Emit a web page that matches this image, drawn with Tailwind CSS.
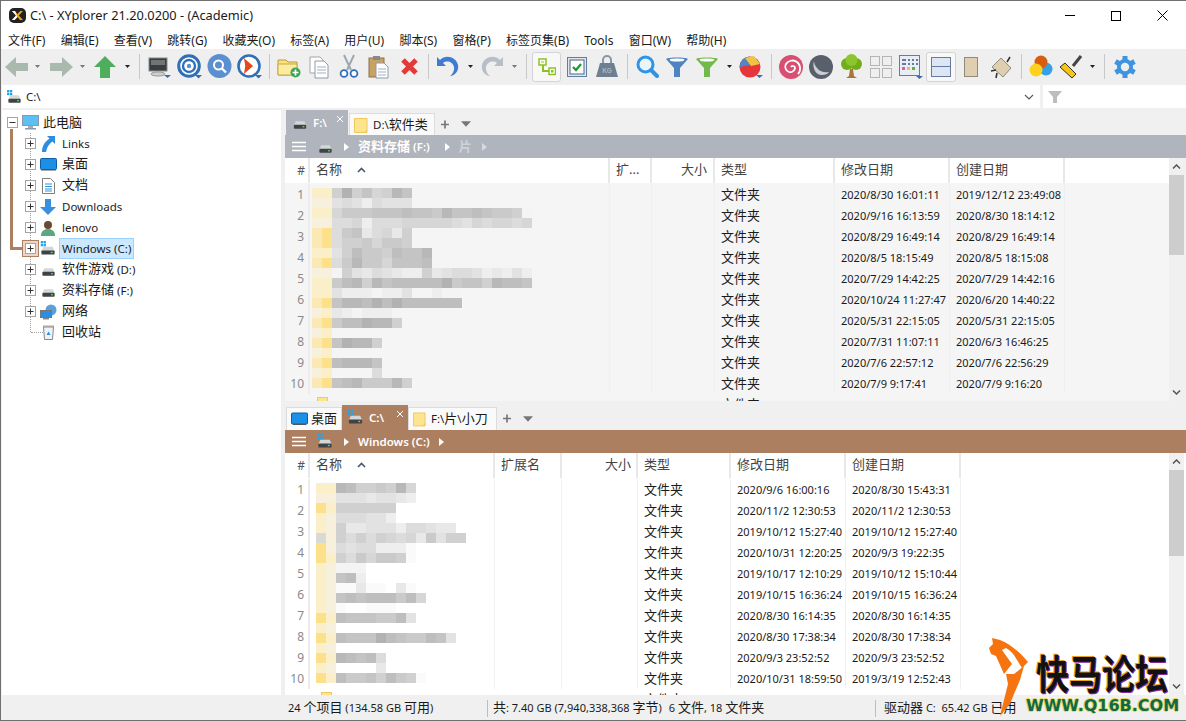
<!DOCTYPE html>
<html lang="zh">
<head>
<meta charset="utf-8">
<script src="https://cdn.jsdelivr.net/npm/@tailwindcss/browser@4"></script>
</head>
<body class="overflow-hidden bg-[#f0f0f0]">
<svg width="0" height="0" class="absolute">
  <symbol id="drive" viewBox="0 0 16 16"><path d="M3 6h10l2 5H1z" fill="#d4d7d9"/><rect x="1" y="10" width="14" height="4.5" rx="1" fill="#3f4345"/><rect x="11" y="11.5" width="2" height="1.5" fill="#5fdc5f"/></symbol>
  <symbol id="win" viewBox="0 0 6 6"><rect width="2.6" height="2.6" fill="#1fa6ee"/><rect x="3.2" width="2.6" height="2.6" fill="#1fa6ee"/><rect y="3.2" width="2.6" height="2.6" fill="#1fa6ee"/><rect x="3.2" y="3.2" width="2.6" height="2.6" fill="#1fa6ee"/></symbol>
  <symbol id="folder" viewBox="0 0 14 16"><path d="M.5 1.5h12.5v14H.5z" fill="#fde48f" stroke="#f0c85c"/><path d="M10 15.5l3-3v3z" fill="#f3c95e"/></symbol>
  <symbol id="plus" viewBox="0 0 11 11"><rect x=".5" y=".5" width="10" height="10" fill="#fff" stroke="#a5a5a5"/><path d="M2.5 5.5h6M5.5 2.5v6" stroke="#333"/></symbol>
  <symbol id="cv" viewBox="0 0 7 4"><path d="M0 0h7L3.5 4z" fill="#222"/></symbol>
  <symbol id="cvg" viewBox="0 0 7 4"><path d="M0 0h7L3.5 4z" fill="#777"/></symbol>
  <symbol id="tri" viewBox="0 0 5 8"><path d="M0 0l5 4-5 4z" fill="#fff"/></symbol>
</svg>

<div class="relative w-[1186px] h-[721px] overflow-hidden flex flex-col border-t border-l border-b border-[#707070] bg-[#f0f0f0] text-[11.5px] text-[#1a1a1a] font-['Noto_Sans','Noto_Sans_CJK_SC',sans-serif]">

  <!-- title -->
  <div class="h-[29px] shrink-0 bg-white flex items-center pl-[8px]">
    <svg width="17" height="15" viewBox="0 0 17 15"><rect x="0" y="0" width="17" height="15" rx="5" fill="#222"/><path d="M3 3l4 4.5L3 12h2.6L8.4 9l2.6 3h3L9.8 7.5 14 3h-2.8L8.5 6 6 3z" fill="#f2a20c"/><path d="M3 3l4 4.500L3 12h2.600L8.400 9 6 3z" fill="#fff"/></svg>
    <span class="ml-[4px] text-[12.8px] pt-px">C:\ - XYplorer 21.20.0200 - (Academic)</span>
    <div class="ml-auto flex items-center h-full pr-[1px]">
      <div class="w-[46px] flex justify-center"><div class="w-[10px] h-px bg-black"></div></div>
      <div class="w-[46px] flex justify-center"><div class="w-[10px] h-[10px] border border-black"></div></div>
      <div class="w-[46px] flex justify-center"><svg width="11" height="11" viewBox="0 0 11 11"><path d="M.5.5l10 10M10.5.5l-10 10" stroke="#000"/></svg></div>
    </div>
  </div>

  <!-- menu -->
  <div class="h-[19px] shrink-0 bg-white flex items-center pl-[7px] pt-[2px] gap-[15.2px] text-[12px] leading-none">
    <span>文件(F)</span><span>编辑(E)</span><span>查看(V)</span><span>跳转(G)</span><span>收藏夹(O)</span><span>标签(A)</span><span>用户(U)</span><span>脚本(S)</span><span>窗格(P)</span><span>标签页集(B)</span><span>Tools</span><span>窗口(W)</span><span>帮助(H)</span>
  </div>

  <!-- toolbar -->
  <div class="h-[35px] shrink-0 flex items-center pl-[2px] bg-[#efefef]">
    <div class="w-[27px] flex justify-center"><svg width="24" height="22" viewBox="0 0 24 22"><path d="M11 1L0 11l11 10v-6h12V7H11z" fill="#a9b9ae"/></svg></div>
    <div class="w-[14px] flex justify-center"><svg width="5" height="3"><use href="#cvg"/></svg></div>
    <div class="w-[29px] ml-[2px] flex justify-center"><svg width="24" height="22" viewBox="0 0 24 22"><path d="M13 1l11 10-11 10v-6H1V7h12z" fill="#a9b9ae"/></svg></div>
    <div class="w-[14px] flex justify-center"><svg width="5" height="3"><use href="#cvg"/></svg></div>
    <div class="w-[30px] ml-[1px] flex justify-center"><svg width="24" height="22" viewBox="0 0 24 22"><path d="M12 0l11 11h-6v11H7V11H1z" fill="#4eae5c"/></svg></div>
    <div class="w-[14px] flex justify-center"><svg width="5" height="3"><use href="#cv"/></svg></div>
    <div class="w-[10px] flex justify-center"><div class="w-px h-[25px] bg-[#c8c8c8]"></div></div>

    <div class="w-[30px] flex justify-center"><svg width="24" height="24" viewBox="0 0 24 24"><rect x="2" y="3" width="18" height="13" fill="#3a3d40" stroke="#8a8a8a"/><rect x="4" y="5" width="14" height="5" fill="#6f7477"/><ellipse cx="11" cy="19" rx="7" ry="2" fill="#cfcfcf" stroke="#999"/><path d="M17 20h7l-3.5 3z" fill="#3e6ba8"/></svg></div>
    <div class="w-[30px] flex justify-center"><svg width="25" height="25" viewBox="0 0 25 25"><circle cx="12" cy="12" r="10.3" fill="#fff" stroke="#2f6fb8" stroke-width="3"/><circle cx="12" cy="12" r="6" fill="none" stroke="#2f6fb8" stroke-width="2.4"/><circle cx="12" cy="12" r="2.2" fill="#5c8fcc"/><path d="M18 21h7l-3.5 3.5z" fill="#3e6ba8"/></svg></div>
    <div class="w-[30px] flex justify-center"><svg width="25" height="25" viewBox="0 0 25 25"><circle cx="12.5" cy="12" r="12" fill="#5a8fd0"/><circle cx="11.5" cy="11" r="4.5" fill="none" stroke="#fff" stroke-width="2"/><path d="M15 14.5l4 4" stroke="#fff" stroke-width="2.4"/></svg></div>
    <div class="w-[30px] flex justify-center"><svg width="25" height="25" viewBox="0 0 25 25"><circle cx="12" cy="12" r="10.5" fill="#fff" stroke="#2f6fb8" stroke-width="2.6"/><path d="M8 6l7 6-7 6 1-6z" fill="#e2491c" stroke="#e2491c" stroke-width="1.5"/><path d="M18 21h7l-3.5 3.5z" fill="#3e6ba8"/></svg></div>
    <div class="w-[10px] flex justify-center"><div class="w-px h-[25px] bg-[#c8c8c8]"></div></div>

    <div class="w-[30px] flex justify-center"><svg width="24" height="22" viewBox="0 0 24 22"><path d="M1 4h8l2 2h9v13H1z" fill="#fbe27c" stroke="#b79a3a"/><path d="M1 8h19v11H1z" fill="#fcec9f" stroke="#c9a84a"/><circle cx="18.5" cy="16.5" r="5" fill="#3aa655"/><path d="M15.5 16.5h6M18.5 13.5v6" stroke="#fff" stroke-width="1.7"/></svg></div>
    <div class="w-[30px] flex justify-center"><svg width="24" height="24" viewBox="0 0 24 24"><path d="M3 2h10l3 3v13H3z" fill="#fff" stroke="#a4a4a4"/><path d="M8 6h9l4 4v13H8z" fill="#fff" stroke="#8d9aa6"/><path d="M10 12h9M10 15h9M10 18h9" stroke="#9fb1c2"/></svg></div>
    <div class="w-[30px] flex justify-center"><svg width="22" height="25" viewBox="0 0 22 25"><path d="M16 1L9 16M6 1l7 15" stroke="#9da8b2" stroke-width="2"/><circle cx="6" cy="19.5" r="3.4" fill="#fff" stroke="#2f6fc0" stroke-width="1.8"/><circle cx="16" cy="19.5" r="3.4" fill="#fff" stroke="#2f6fc0" stroke-width="1.8"/></svg></div>
    <div class="w-[30px] flex justify-center"><svg width="24" height="24" viewBox="0 0 24 24"><rect x="2" y="3" width="15" height="19" fill="#c8a165" stroke="#8e7346"/><rect x="6" y="1" width="7" height="4" fill="#888"/><path d="M9 8h8l4 4v11H9z" fill="#fff" stroke="#8d9aa6"/><path d="M11 14h8M11 17h8M11 20h8" stroke="#9fb1c2"/></svg></div>
    <div class="w-[30px] flex justify-center"><svg width="19" height="19" viewBox="0 0 19 19"><path d="M3 3l13 13M16 3L3 16" stroke="#e23a36" stroke-width="5"/></svg></div>
    <div class="w-[9px] flex justify-center"><div class="w-px h-[25px] bg-[#c8c8c8]"></div></div>

    <div class="w-[30px] flex justify-center"><svg width="24" height="23" viewBox="0 0 24 23"><path d="M1 2v9h9L7 8c4-3 10-1 11 4 .6 3-1 7-4 9 6-1 9-6 8-11C20 2 10-1 4 5z" fill="#3f7cd0"/></svg></div>
    <div class="w-[14px] flex justify-center"><svg width="5" height="3"><use href="#cv"/></svg></div>
    <div class="w-[30px] flex justify-center"><svg width="24" height="23" viewBox="0 0 24 23"><path d="M23 2v9h-9l3-3C13 5 7 7 6 12c-.6 3 1 7 4 9-6-1-9-6-8-11C4 2 14-1 20 5z" fill="#b7bec8"/></svg></div>
    <div class="w-[14px] flex justify-center"><svg width="5" height="3"><use href="#cvg"/></svg></div>
    <div class="w-[11px] flex justify-center"><div class="w-px h-[25px] bg-[#c8c8c8]"></div></div>

    <div class="w-[29px] h-[30px] flex items-center justify-center bg-[#f8f8f8] border border-[#d4d4d4] rounded-[3px]"><svg width="18" height="18" viewBox="0 0 18 18"><path d="M5 7v6h7" fill="none" stroke="#8cc21f" stroke-width="2"/><rect x="1" y="1" width="7" height="6" fill="#fff" stroke="#8cc21f" stroke-width="1.5"/><path d="M3 4h3" stroke="#8cc21f"/><rect x="11" y="10" width="6.5" height="6.5" fill="#fff" stroke="#8cc21f" stroke-width="1.5"/><rect x="13" y="12" width="2.5" height="2.5" fill="#8cc21f"/></svg></div>
    <div class="w-[31px] flex justify-center"><svg width="20" height="20" viewBox="0 0 20 20"><rect x=".5" y=".5" width="19" height="19" fill="#dfe6ee" stroke="#5f7ea0"/><rect x="3" y="3" width="14" height="14" fill="#fff" stroke="#4a6584"/><path d="M6 10l3 3 5-6" fill="none" stroke="#1c9a2a" stroke-width="2.2"/></svg></div>
    <div class="w-[30px] flex justify-center"><svg width="24" height="23" viewBox="0 0 24 23"><path d="M8 8V5a4 4 0 0 1 8 0v3" fill="none" stroke="#8997a6" stroke-width="2"/><path d="M5 8h14l4 14H1z" fill="#6d7f91"/><text x="12" y="18" font-size="6.5" font-weight="700" text-anchor="middle" fill="#aab6c2" font-family="Liberation Sans">KG</text></svg></div>
    <div class="w-[10px] flex justify-center"><div class="w-px h-[25px] bg-[#c8c8c8]"></div></div>

    <div class="w-[30px] flex justify-center"><svg width="23" height="23" viewBox="0 0 23 23"><circle cx="9.5" cy="9.5" r="7.5" fill="#e9f5fd" stroke="#2f94e8" stroke-width="3"/><path d="M15 15l6 6" stroke="#2f94e8" stroke-width="4" stroke-linecap="round"/></svg></div>
    <div class="w-[30px] flex justify-center"><svg width="22" height="20" viewBox="0 0 22 20"><path d="M0 2c2-2 20-2 22 0l-8 9v9h-6v-9z" fill="#4f84c0"/><ellipse cx="11" cy="3" rx="7.5" ry="1.6" fill="#fff"/></svg></div>
    <div class="w-[30px] flex justify-center"><svg width="22" height="20" viewBox="0 0 22 20"><path d="M0 2c2-2 20-2 22 0l-8 9v9h-6v-9z" fill="#71b94a"/><ellipse cx="11" cy="3" rx="7.5" ry="1.6" fill="#fff"/></svg></div>
    <div class="w-[14px] flex justify-center"><svg width="5" height="3"><use href="#cv"/></svg></div>
    <div class="w-[30px] flex justify-center"><svg width="24" height="24" viewBox="0 0 24 24"><circle cx="11" cy="12" r="10.5" fill="#e5363b"/><path d="M11 1.5A10.5 10.5 0 0 0 .5 12L11 10z" fill="#4f86c6"/><path d="M6 3l9-2 6 8-9 2z" fill="#f2c341"/><path d="M17 20h7l-3.5 3z" fill="#3e6ba8"/></svg></div>
    <div class="w-[10px] flex justify-center"><div class="w-px h-[25px] bg-[#c8c8c8]"></div></div>

    <div class="w-[30px] flex justify-center"><svg width="24" height="24" viewBox="0 0 24 24"><circle cx="12" cy="12" r="12" fill="#d94f72"/><path d="M12 12c1-2 4-1 4 1s-3 5-6 4-5-5-3-8 7-5 11-2 4 9 1 12" fill="none" stroke="#fff" stroke-width="1.8"/></svg></div>
    <div class="w-[30px] flex justify-center"><svg width="24" height="24" viewBox="0 0 24 24"><circle cx="12" cy="12" r="12" fill="#5a606b"/><path d="M5 6c-2 6 1 14 8 14 3 0 6-1 7-3-4 1-9 0-12-4-2-2-3-5-3-7z" fill="#c9ced6"/></svg></div>
    <div class="w-[30px] flex justify-center"><svg width="23" height="25" viewBox="0 0 23 25"><path d="M10 15h3l1 7 3 2H6l3-2z" fill="#a9773a"/><circle cx="7" cy="10" r="6" fill="#71ad1c"/><circle cx="16" cy="10" r="6" fill="#71ad1c"/><circle cx="11.5" cy="6" r="6" fill="#8cc62c"/></svg></div>
    <div class="w-[30px] flex justify-center"><div class="grid grid-cols-2 gap-[2px]"><div class="w-[10px] h-[10px] border border-[#b5b5b5]"></div><div class="w-[10px] h-[10px] border border-[#b5b5b5]"></div><div class="w-[10px] h-[10px] border border-[#b5b5b5]"></div><div class="w-[10px] h-[10px] border border-[#b5b5b5]"></div></div></div>
    <div class="w-[30px] flex justify-center"><svg width="24" height="24" viewBox="0 0 24 24"><rect x=".5" y=".5" width="20" height="20" fill="#e9edf5" stroke="#6a7a9a"/><path d="M3 5h4M9 5h2M13 5h2M17 5h2M3 9h4M9 9h2M13 9h2M17 9h2" stroke="#6a7a9a" stroke-width="2"/><rect x="3" y="12" width="3" height="3" fill="#d864a8"/><rect x="8" y="12" width="3" height="3" fill="#f0c030"/><rect x="13" y="12" width="3" height="3" fill="#60b040"/><path d="M17 21h7l-3.5 3z" fill="#3e6ba8"/></svg></div>
    <div class="w-[30px] h-[30px] flex items-center justify-center bg-[#f8f8f8] border border-[#d4d4d4] rounded-[3px]"><div class="w-[20px] h-[20px] border border-[#6a7a9a] flex flex-col"><div class="h-[8px] bg-[#dce6f4]"></div><div class="h-px bg-[#6a7a9a]"></div><div class="flex-1 bg-[#dce6f4]"></div></div></div>
    <div class="w-[30px] flex justify-center"><div class="w-[14px] h-[20px] bg-[#dfcfb0] border border-[#8f8a7a]"></div></div>
    <div class="w-[30px] flex justify-center"><svg width="24" height="24" viewBox="0 0 24 24"><path d="M12 3l10 10-8 9L3 12z" fill="#dfcfb0" stroke="#8f8a7a"/><path d="M18 7l3-5M7 15l-5 1M8 18l-1 5" stroke="#333" stroke-width="1.6"/></svg></div>
    <div class="w-[10px] flex justify-center"><div class="w-px h-[25px] bg-[#c8c8c8]"></div></div>

    <div class="w-[30px] flex justify-center"><svg width="24" height="23" viewBox="0 0 24 23"><circle cx="17" cy="14" r="6.5" fill="#34a0e6"/><circle cx="12" cy="7" r="6.5" fill="#d95d0e"/><circle cx="7" cy="15" r="6.5" fill="#ffd01c"/></svg></div>
    <div class="w-[30px] flex justify-center"><svg width="24" height="24" viewBox="0 0 24 24"><path d="M14 11l8-10" stroke="#444" stroke-width="3"/><path d="M1 12l5-4 11 11-4 4z" fill="#f7c60f" stroke="#333"/></svg></div>
    <div class="w-[12px] flex justify-center"><svg width="5" height="3"><use href="#cv"/></svg></div>
    <div class="w-[12px] flex justify-center"><div class="w-px h-[25px] bg-[#c8c8c8]"></div></div>
    <div class="w-[30px] flex justify-center"><svg width="24" height="24" viewBox="0 0 24 24"><path d="M12 1v22M2.500 6.500l19 11M2.500 17.500l19-11" stroke="#3f94e0" stroke-width="5"/><circle cx="12" cy="12" r="8" fill="#3f94e0"/><circle cx="12" cy="12" r="4.200" fill="#efefef"/></svg></div>
  </div>

  <!-- address -->
  <div class="h-[24px] shrink-0 flex items-stretch pt-px pl-[1px] bg-[#f0f0f0]">
    <div class="w-[1038px] bg-white flex items-center pl-[5px] relative">
      <svg width="15" height="14" viewBox="0 0 16 15" class="shrink-0"><use href="#drive"/><svg x="0" y="0" width="6" height="6"><use href="#win"/></svg></svg>
      <span class="ml-[4px]">C:\</span>
      <svg class="ml-auto mr-[6px]" width="10" height="6" viewBox="0 0 10 6"><path d="M1 1l4 4 4-4" fill="none" stroke="#555" stroke-width="1.1"/></svg>
    </div>
    <div class="w-[3px]"></div>
    <div class="flex-1 bg-white flex items-center pl-[5px]"><svg width="14" height="13" viewBox="0 0 14 13"><path d="M0 1h14L9 7v6H5V7z" fill="#bdbdbd"/></svg></div>
  </div>

  <!-- main -->
  <div class="flex-1 min-h-0 flex pt-[2px]">
    <!-- tree -->
    <div class="w-[279px] ml-[1px] shrink-0 bg-white relative pt-[2px]">
      <div class="absolute left-[28px] top-[23px] h-[199px] border-l border-dotted border-[#a0a0a0]"></div>
      <div class="absolute left-[29px] top-[222px] w-[12px] border-t border-dotted border-[#a0a0a0]"></div>
      <div class="absolute left-[8px] top-[19px] w-[3px] h-[120px] bg-[#ad7f61]"></div>
      <div class="absolute left-[8px] top-[137px] w-[14px] h-[3px] bg-[#ad7f61]"></div>
      <div class="absolute left-[20px] top-[130px] w-[17px] h-[17px] bg-[#ead6c9] border border-[#ad7f61]"></div>
      <div id="tree" class="relative flex flex-col"></div>
    </div>
    <div class="w-[4px] shrink-0"></div>
    <!-- right -->
    <div class="flex-1 min-w-0 flex flex-col">
      <!-- upper pane -->
      <div class="h-[291px] shrink-0 flex flex-col">
        <div class="h-[25px] shrink-0 flex items-end pl-[1px]">
          <div class="w-[62px] h-[25px] bg-[#b0b4bc] relative flex items-center pl-[7px] text-white"><svg width="14" height="14"><use href="#drive"/></svg><span class="ml-[6px] font-semibold">F:\</span><svg class="absolute right-[4px] top-[5px]" width="8" height="8" viewBox="0 0 8 8"><path d="M1 1l6 6M7 1L1 7" stroke="#fff"/></svg></div>
          <div class="w-[86px] h-[22px] ml-[1px] bg-[#fafafa] border border-b-0 border-[#dcdcdc] flex items-center pl-[4px]"><svg width="14" height="16"><use href="#folder"/></svg><span class="ml-[5px]">D:\<span class="text-[13px]">软件类</span></span></div>
          <div class="h-[22px] flex items-center ml-[5px]"><svg width="11" height="11" viewBox="0 0 11 11"><path d="M1 5.500h8M5 1.500v8" stroke="#777" stroke-width="1.700"/></svg><svg class="ml-[10px]" width="10" height="6"><use href="#cvg"/></svg></div>
        </div>
        <div class="h-[23px] shrink-0 bg-[#b0b4bc] flex items-center pl-[7px] text-white">
          <svg width="14" height="11" viewBox="0 0 14 11"><path d="M0 1.500h14M0 5.500h14M0 9.500h14" stroke="#fff" stroke-width="1.500"/></svg>
          <svg class="ml-[12px]" width="15" height="14"><use href="#drive"/></svg>
          <svg class="ml-[11px]" width="5" height="8"><use href="#tri"/></svg>
          <span class="ml-[9px] font-semibold"><span class="text-[13px]">资料存储</span> (F:)</span>
          <svg class="ml-[15px]" width="5" height="8"><use href="#tri"/></svg>
          <span class="ml-[9px] font-semibold text-[13px] text-[#cfd2d7]">片</span>
          <svg class="ml-[10px] opacity-50" width="5" height="8"><use href="#tri"/></svg>
        </div>
        <div class="flex-1 min-h-0 flex">
          <div class="w-[884px] shrink-0 flex flex-col relative overflow-hidden bg-[#f5f5f5]">
            <div class="h-[25px] shrink-0 bg-white flex items-center text-[#444] text-[13px]">
              <div class="w-[25px] text-right pr-[3px] h-full leading-[25px] border-r-2 border-[#e8e8e8] text-[#555] text-[12px]">#</div>
              <div class="w-[300px] h-full pl-[6px] pb-[2px] flex items-center border-r-2 border-[#e8e8e8]">名称<svg class="ml-[15px]" width="9" height="6" viewBox="0 0 9 6"><path d="M1 5l3.500-3.500L8 5" fill="none" stroke="#4a5a70" stroke-width="1.700"/></svg></div>
              <div class="w-[42px] h-full pl-[6px] pb-[2px] flex items-center border-r-2 border-[#e8e8e8]">扩...</div>
              <div class="w-[63px] h-full pr-[6px] pb-[2px] flex items-center justify-end border-r-2 border-[#e8e8e8]">大小</div>
              <div class="w-[120px] h-full pl-[6px] pb-[2px] flex items-center border-r-2 border-[#e8e8e8]">类型</div>
              <div class="w-[115px] h-full pl-[6px] pb-[2px] flex items-center border-r-2 border-[#e8e8e8]">修改日期</div>
              <div class="w-[115px] h-full pl-[6px] pb-[2px] flex items-center border-r-2 border-[#e8e8e8]">创建日期</div>
            </div>
            <div id="rowsA" class="flex-1 min-h-0 pt-[1px] relative overflow-hidden"></div>
          </div>
          <div class="w-[15px] shrink-0 bg-[#f0f0f0] flex flex-col items-center relative">
            <svg class="mt-[6px]" width="9" height="5" viewBox="0 0 9 5"><path d="M1 4.500L4.500 1 8 4.500" fill="none" stroke="#555" stroke-width="1.500"/></svg>
            <div class="w-full h-[80px] mt-[6px] bg-[#cdcdcd]"></div>
            <svg class="mt-auto mb-[6px]" width="9" height="5" viewBox="0 0 9 5"><path d="M1 .5L4.500 4 8 .5" fill="none" stroke="#555" stroke-width="1.500"/></svg>
          </div>
        </div>
      </div>
      <!-- lower pane -->
      <div class="flex-1 min-h-0 flex flex-col">
        <div class="h-[29px] shrink-0 flex items-end pl-[1px]">
          <div class="w-[56px] h-[23px] bg-[#fafafa] border border-b-0 border-[#dcdcdc] flex items-center pl-[4px]"><svg width="17" height="14" viewBox="0 0 17 14"><rect x=".5" y="1" width="16" height="11" rx="1" fill="#1c8fe6" stroke="#0f5ea8"/><rect x="2" y="12" width="13" height="1" fill="#555"/></svg><span class="ml-[3px] text-[13px]">桌面</span></div>
          <div class="w-[66px] h-[25px] bg-[#ad7f61] relative flex items-center pl-[6px] text-white"><svg width="15" height="15" viewBox="0 0 16 16"><use href="#drive"/><svg width="6" height="6"><use href="#win"/></svg></svg><span class="ml-[6px] font-semibold">C:\</span><svg class="absolute right-[4px] top-[5px]" width="8" height="8" viewBox="0 0 8 8"><path d="M1 1l6 6M7 1L1 7" stroke="#fff"/></svg></div>
          <div class="w-[89px] h-[23px] bg-[#fafafa] border border-b-0 border-[#dcdcdc] flex items-center pl-[4px]"><svg width="13" height="16"><use href="#folder"/></svg><span class="ml-[5px]">F:\<span class="text-[13px]">片</span>\<span class="text-[13px]">小刀</span></span></div>
          <div class="h-[23px] flex items-center ml-[5px]"><svg width="11" height="11" viewBox="0 0 11 11"><path d="M1 5.500h8M5 1.500v8" stroke="#777" stroke-width="1.700"/></svg><svg class="ml-[10px]" width="10" height="6"><use href="#cvg"/></svg></div>
        </div>
        <div class="h-[23px] shrink-0 bg-[#ad7f61] flex items-center pl-[7px] text-white">
          <svg width="14" height="11" viewBox="0 0 14 11"><path d="M0 1.500h14M0 5.500h14M0 9.500h14" stroke="#fff" stroke-width="1.500"/></svg>
          <svg class="ml-[11px]" width="16" height="15" viewBox="0 0 16 16"><use href="#drive"/><svg width="6" height="6"><use href="#win"/></svg></svg>
          <svg class="ml-[11px]" width="5" height="8"><use href="#tri"/></svg>
          <span class="ml-[9px] font-semibold">Windows (C:)</span>
          <svg class="ml-[9px]" width="5" height="8"><use href="#tri"/></svg>
        </div>
        <div class="flex-1 min-h-0 flex bg-white">
          <div class="w-[884px] shrink-0 flex flex-col relative overflow-hidden">
            <div class="h-[25px] shrink-0 bg-white flex items-center text-[#444] text-[13px]">
              <div class="w-[25px] text-right pr-[3px] h-full leading-[25px] border-r-2 border-[#e8e8e8] text-[#555] text-[12px]">#</div>
              <div class="w-[185px] h-full pl-[6px] pb-[2px] flex items-center border-r-2 border-[#e8e8e8]">名称<svg class="ml-[15px]" width="9" height="6" viewBox="0 0 9 6"><path d="M1 5l3.500-3.500L8 5" fill="none" stroke="#4a5a70" stroke-width="1.700"/></svg></div>
              <div class="w-[67px] h-full pl-[6px] pb-[2px] flex items-center border-r-2 border-[#e8e8e8]">扩展名</div>
              <div class="w-[76px] h-full pr-[5px] pb-[2px] flex items-center justify-end border-r-2 border-[#e8e8e8]">大小</div>
              <div class="w-[93px] h-full pl-[6px] pb-[2px] flex items-center border-r-2 border-[#e8e8e8]">类型</div>
              <div class="w-[115px] h-full pl-[6px] pb-[2px] flex items-center border-r-2 border-[#e8e8e8]">修改日期</div>
              <div class="w-[115px] h-full pl-[6px] pb-[2px] flex items-center border-r-2 border-[#e8e8e8]">创建日期</div>
            </div>
            <div id="rowsB" class="flex-1 min-h-0 pt-[1px] relative overflow-hidden"></div>
          </div>
          <div class="w-[15px] shrink-0 bg-[#f0f0f0] flex flex-col items-center">
            <svg class="mt-[6px]" width="9" height="5" viewBox="0 0 9 5"><path d="M1 4.500L4.500 1 8 4.500" fill="none" stroke="#555" stroke-width="1.500"/></svg>
            <div class="w-full h-[86px] mt-[6px] bg-[#cdcdcd]"></div>
            <svg class="mt-auto mb-[6px]" width="9" height="5" viewBox="0 0 9 5"><path d="M1 .5L4.500 4 8 .5" fill="none" stroke="#555" stroke-width="1.500"/></svg>
          </div>
        </div>
      </div>
    </div>
  </div>

  <!-- status -->
  <div class="relative h-[25px] shrink-0 flex items-center text-[11px] pt-px bg-[#f0f0f0]">
    <div class="w-[486px] pl-[287px] whitespace-nowrap">24 <span class="text-[13px]">个项目</span> (134.58 GB <span class="text-[13px]">可用</span>)</div>
    <div class="w-px h-[17px] bg-[#bdbdbd]"></div>
    <div class="w-[387px] pl-[5px] whitespace-nowrap"><span class="text-[13px]">共</span>: 7.40 GB (7,940,338,368 <span class="text-[13px]">字节</span>)<span class="ml-[7px]">6 <span class="text-[13px]">文件</span>, 18 <span class="text-[13px]">文件夹</span></span></div>
    <div class="w-px h-[17px] bg-[#bdbdbd]"></div>
    <div class="pl-[8px] whitespace-nowrap"><span class="text-[13px]">驱动器</span> C:&nbsp; 65.42 GB <span class="text-[13px]">已用</span></div>
  </div>

  <!-- watermark -->
  <div class="absolute left-[985px] top-[637px] w-[195px] h-[80px] pointer-events-none">
    <svg class="absolute left-0 top-0" width="45" height="79" viewBox="0 0 45 79"><path d="M6 0l8 2c10 4 20 12 28 22l-6 6-5-8c-3-6-7-10-11-12l-4 2 10 14-8 10-8-18-5-2-2-6 4-4z" fill="#f5740f"/><path d="M38 28l-4 14-6 14-4 10-10 12 4-16 4-16-2-10h8z" fill="#f5740f"/></svg>
    <div class="absolute left-[50px] top-[8px] whitespace-nowrap text-[33px] leading-[44px] font-bold text-[#111] scale-y-[1.2] origin-top font-['Noto_Sans_CJK_SC',sans-serif] [text-shadow:-1px_-1px_0_#e8a020,1px_1px_0_#8a2aa0]">快马论坛</div>
    <div class="absolute left-[40px] top-[58px] whitespace-nowrap text-[16px] leading-[20px] font-bold text-[#0f6a4a] font-['DejaVu_Sans',sans-serif] [text-shadow:1px_0_0_#e8d860,-1px_0_0_#e8d860,0_1px_0_#e8d860,0_-1px_0_#e8d860]">WWW.Q16B.COM</div>
  </div>
</div>

<script>
const C=s=>`<span class="relative -top-px text-[13px]">${s}</span>`;
const treeItems=[
 ['root','此电脑',0],['links','Links',1],['desk',C('桌面'),1],['doc',C('文档'),1],['dl','Downloads',1],['user','lenovo',1],['c','Windows (C:)',1],['d',C('软件游戏')+' (D:)',1],['d',C('资料存储')+' (F:)',1],['net',C('网络'),1],['bin',C('回收站'),2]];
const ic={
 root:'<svg width="17" height="15" viewBox="0 0 17 15"><rect x=".5" y=".5" width="16" height="10" fill="#5cc0f4" stroke="#8a9aa8"/><rect x="6" y="11" width="5" height="2" fill="#aab"/><rect x="3" y="13" width="11" height="1.500" fill="#8a9aa8"/></svg>',
 links:'<svg width="14" height="16" viewBox="0 0 14 16"><path d="M6 0h8v8l-2.500-2.500C8 8 6 11 5 16H1c0-5 2-10 7.500-13.500z" fill="#2d8de0"/></svg>',
 desk:'<svg width="17" height="13" viewBox="0 0 17 13"><rect x=".5" y=".5" width="16" height="11" rx="1" fill="#1c8fe6" stroke="#0f5ea8"/><rect x="1" y="11.500" width="15" height="1" fill="#555"/></svg>',
 doc:'<svg width="13" height="16" viewBox="0 0 13 16"><path d="M.5.5h8l4 4v11H.5z" fill="#fff" stroke="#7d7d7d"/><path d="M3 6h7M3 8.500h7M3 11h7M3 13h7" stroke="#2f94e0"/></svg>',
 dl:'<svg width="16" height="16" viewBox="0 0 16 16"><path d="M5 0h6v8h5l-8 8-8-8h5z" fill="#3a8fe0"/></svg>',
 user:'<svg width="14" height="16" viewBox="0 0 14 16"><circle cx="7" cy="5" r="4" fill="#6b4a34"/><path d="M0 16c0-5 3-7 7-7s7 2 7 7z" fill="#5aa882"/></svg>',
 c:'<svg width="16" height="15" viewBox="0 0 16 16"><use href="#drive"/><svg width="6" height="6"><use href="#win"/></svg></svg>',
 d:'<svg width="15" height="14"><use href="#drive"/></svg>',
 net:'<svg width="17" height="16" viewBox="0 0 17 16"><circle cx="11" cy="6" r="5.500" fill="#5b9fd8"/><rect x=".5" y="6.500" width="11" height="7" fill="#2d8de0" stroke="#777"/><rect x="3" y="14" width="6" height="1.500" fill="#888"/></svg>',
 bin:'<svg width="13" height="15" viewBox="0 0 13 15"><path d="M1.500 2h10l-1 12.500h-8z" fill="#eef2f5" stroke="#888"/><rect x="1" y=".5" width="11" height="1.500" fill="#aaa"/><path d="M4.500 10l2-3.500 2 3.500z" fill="#2d8de0"/></svg>'
};
const plus='<svg width="11" height="11"><use href="#plus"/></svg>';
let t='';
treeItems.forEach(([k,label,lv],i)=>{
 const sel=i===6;
 const minus='<svg width="11" height="11" viewBox="0 0 11 11"><rect x=".5" y=".5" width="10" height="10" fill="#fff" stroke="#a5a5a5"/><path d="M2.500 5.500h6" stroke="#333"/></svg>';
 if(lv===0){t+=`<div class="h-[21px] flex items-center pl-[5px]">${minus}<div class="w-[17px] ml-[4px] flex justify-center">${ic[k]}</div><span class="ml-[4px] text-[13px]">${label}</span></div>`;}
 else{t+=`<div class="h-[21px] flex items-center pl-[23px]"><div class="w-[11px] relative">${lv===1?plus:''}</div><div class="w-[24px] flex justify-center">${ic[k]}</div><span class="${sel?'bg-[#cce8ff] border border-[#99d1ff] h-[21px] leading-[19px] px-[2px] -ml-[1px]':'ml-[2px]'}">${label}</span></div>`;}
});
document.getElementById('tree').innerHTML=t;

const F={y:'#fde08a',z:'#fbe9b5',l:'#faefc8',p:'#f6f0dc',g:'#d8dad6'};
const shade=c=>{if(c==='.')return null;const v=0xa0+parseInt(c,16)*6;const h=v.toString(16);return '#'+h+h+h;};
function mosaic(bands,left,top){
 let h='';
 bands.forEach((b,i)=>{
  [...b].forEach((c,j)=>{
   const col=j<2?F[c]:shade(c);
   if(col)h+=`<div class="absolute w-[10px] h-[10px]" style="left:${left+j*10}px;top:${top+i*10}px;background:${col}"></div>`;
  });
 });
 return h;
}
function rows(id,data,w,left,top,bands){
 let h='<div class="relative">';
 data.forEach((r,i)=>{
  h+=`<div class="h-[21px] flex items-center whitespace-nowrap"><div class="w-[25px] text-[12px] text-right pr-[4px] text-[#8a8a8a] border-r-2 border-[#ececec] h-full leading-[21px]">${i+1}</div><div class="h-full border-r border-[#f0f0f2]" style="width:${w[0]}px"></div><div class="h-full border-r border-[#f0f0f2]" style="width:${w[1]}px"></div><div class="h-full border-r border-[#f0f0f2]" style="width:${w[2]}px"></div><div class="h-full pl-[6px] leading-[21px] text-[13px] border-r border-[#f0f0f2]" style="width:${w[3]}px">文件夹</div><div class="h-full pl-[6px] leading-[21px] text-[11px] border-r border-[#f0f0f2]" style="width:${w[4]}px">${r[0]}</div><div class="h-full pl-[6px] leading-[21px] text-[11px] border-r border-[#f0f0f2]" style="width:${w[5]}px">${r[1]}</div></div>`;
 });
 h+=`<div class="h-[21px] flex items-center"><div class="w-[25px] h-full"></div><div class="h-full" style="width:${w[0]+w[1]+w[2]}px"></div><div class="pl-[6px] leading-[21px] text-[13px]">文件夹</div></div>`;
 h+=mosaic(bands,left,top);
 h+=`<div class="absolute w-[11px] h-[10px] bg-[#fde48f] border border-[#f0c85c]" style="left:${left+5}px;top:${top+209}px"></div>`;
 h+='</div>';
 document.getElementById(id).innerHTML=h;
}
rows('rowsA',[
['2020/8/30 16:01:11','2019/12/12 23:49:08'],['2020/9/16 16:13:59','2020/8/30 18:14:12'],['2020/8/29 16:49:14','2020/8/29 16:49:14'],['2020/8/5 18:15:49','2020/8/5 18:15:08'],['2020/7/29 14:42:25','2020/7/29 14:42:16'],['2020/10/24 11:27:47','2020/6/20 14:40:22'],['2020/5/31 22:15:05','2020/5/31 22:15:05'],['2020/7/31 11:07:11','2020/6/3 16:46:25'],['2020/7/6 22:57:12','2020/7/6 22:56:29'],['2020/7/9 9:17:41','2020/7/9 9:16:20']
],[300,42,63,120,115,115],27,4,[
'll83869846','ppbabdabbb',
'll97776665667466567 78e'.replace(' ','').slice(0,22),'ppaa9daaa99999ab9a99a9e'.slice(0,22),
'zya76ca9c8','zya8879778',
'llb857785664','zya747796665',
'ppe8bcabcdd8cbaabdcdbd','ll75484655555376684556',
'llbdddeddb..dee','zy6445353555555',
'plcdeddde','zy7553448',
'pl','zy63448',
'pl','zy54446',
'pl....a','zy65477748'
]);
rows('rowsB',[
['2020/9/6 16:00:16','2020/8/30 15:43:31'],['2020/11/2 12:30:53','2020/11/2 12:30:53'],['2019/10/12 15:27:40','2019/10/12 15:27:40'],['2020/10/31 12:20:25','2020/9/3 19:22:35'],['2019/10/17 12:10:29','2019/10/12 15:10:44'],['2019/10/15 16:36:24','2019/10/15 16:36:24'],['2020/8/30 16:14:35','2020/8/30 16:14:35'],['2020/8/30 17:38:34','2020/8/30 17:38:34'],['2020/9/3 23:52:52','2020/9/3 23:52:52'],['2020/10/31 18:59:50','2019/3/19 12:52:43']
],[185,67,76,93,115,115],31,4,[
'll45887849','ppbbbcbbcd',
'yl888888','lpaaabbd',
'lp8ccbbbdaabcc','gp8a8a89a9c7b88',
'ypabaadddf','yl8a79778f',
'lpeee','lp65d',
'lpffcff.cf','lp656555759',
'lpf..fff','yl5666775b',
'lp','yl56663567756b',
'lp','yl4565a',
'lp....c','yl57768578f'
]);
</script>
</body>
</html>
